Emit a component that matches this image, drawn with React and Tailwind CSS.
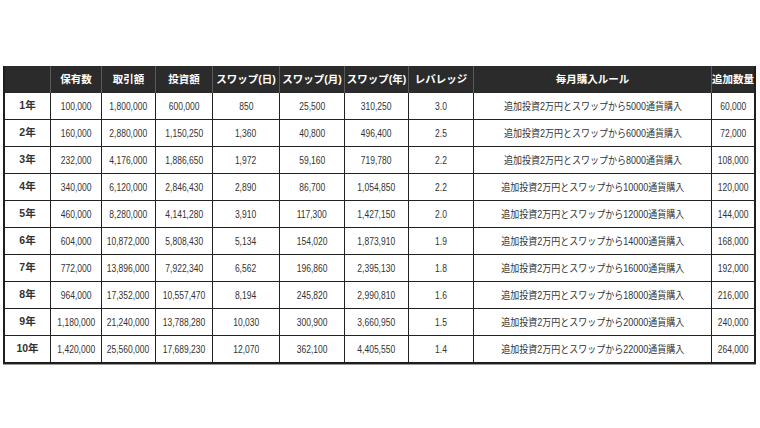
import React from "react";

const headers = ["", "保有数", "取引額", "投資額", "スワップ(日)", "スワップ(月)", "スワップ(年)", "レバレッジ", "毎月購入ルール", "追加数量"];

const rows = [
  ["1年", "100,000", "1,800,000", "600,000", "850", "25,500", "310,250", "3.0", "5000", "60,000"],
  ["2年", "160,000", "2,880,000", "1,150,250", "1,360", "40,800", "496,400", "2.5", "6000", "72,000"],
  ["3年", "232,000", "4,176,000", "1,886,650", "1,972", "59,160", "719,780", "2.2", "8000", "108,000"],
  ["4年", "340,000", "6,120,000", "2,846,430", "2,890", "86,700", "1,054,850", "2.2", "10000", "120,000"],
  ["5年", "460,000", "8,280,000", "4,141,280", "3,910", "117,300", "1,427,150", "2.0", "12000", "144,000"],
  ["6年", "604,000", "10,872,000", "5,808,430", "5,134", "154,020", "1,873,910", "1.9", "14000", "168,000"],
  ["7年", "772,000", "13,896,000", "7,922,340", "6,562", "196,860", "2,395,130", "1.8", "16000", "192,000"],
  ["8年", "964,000", "17,352,000", "10,557,470", "8,194", "245,820", "2,990,810", "1.6", "18000", "216,000"],
  ["9年", "1,180,000", "21,240,000", "13,788,280", "10,030", "300,900", "3,660,950", "1.5", "20000", "240,000"],
  ["10年", "1,420,000", "25,560,000", "17,689,230", "12,070", "362,100", "4,405,550", "1.4", "22000", "264,000"],
];

const gridCols = "grid grid-cols-[46px_51px_54px_57px_67px_65px_64px_65px_238px_42px]";

export default function App() {
  return (
    <div className="w-[760px] h-[428px] bg-white pt-[66px] pl-[3px] font-['Liberation_Sans','Noto_Sans_CJK_JP',sans-serif]">
      <div className="w-[753px] border-l-2 border-r-2 border-b-2 border-[#1e1e1e] shadow-[0_1px_0_#9a9a9a]">
        <div className={`${gridCols} h-[27px] bg-[#2b2b2b]`}>
          {headers.map((h, i) => (
            <div
              key={i}
              className={`flex items-center justify-center whitespace-nowrap text-[10.5px] font-bold text-white ${i < headers.length - 1 ? "border-r border-[#5a5a5a]" : ""}`}
            >
              {h}
            </div>
          ))}
        </div>
        {rows.map((r, ri) => (
          <div
            key={ri}
            className={`${gridCols} ${ri === rows.length - 1 ? "h-[26px]" : "h-[27px] border-b border-[#222]"}`}
          >
            {r.map((c, ci) => (
              <div
                key={ci}
                className={`flex items-center justify-center whitespace-nowrap text-[#333] ${ci < r.length - 1 ? "border-r border-[#222]" : ""} ${ci === 0 ? "text-[10.5px] font-bold text-[#222]" : "text-[10px]"}`}
              >
                {ci === 8 ? (
                  <span className="inline-block scale-x-[0.9]">{`追加投資2万円とスワップから${c}通貨購入`}</span>
                ) : ci === 0 ? (
                  c
                ) : (
                  <span className="inline-block scale-x-[0.85]">{c}</span>
                )}
              </div>
            ))}
          </div>
        ))}
      </div>
    </div>
  );
}
